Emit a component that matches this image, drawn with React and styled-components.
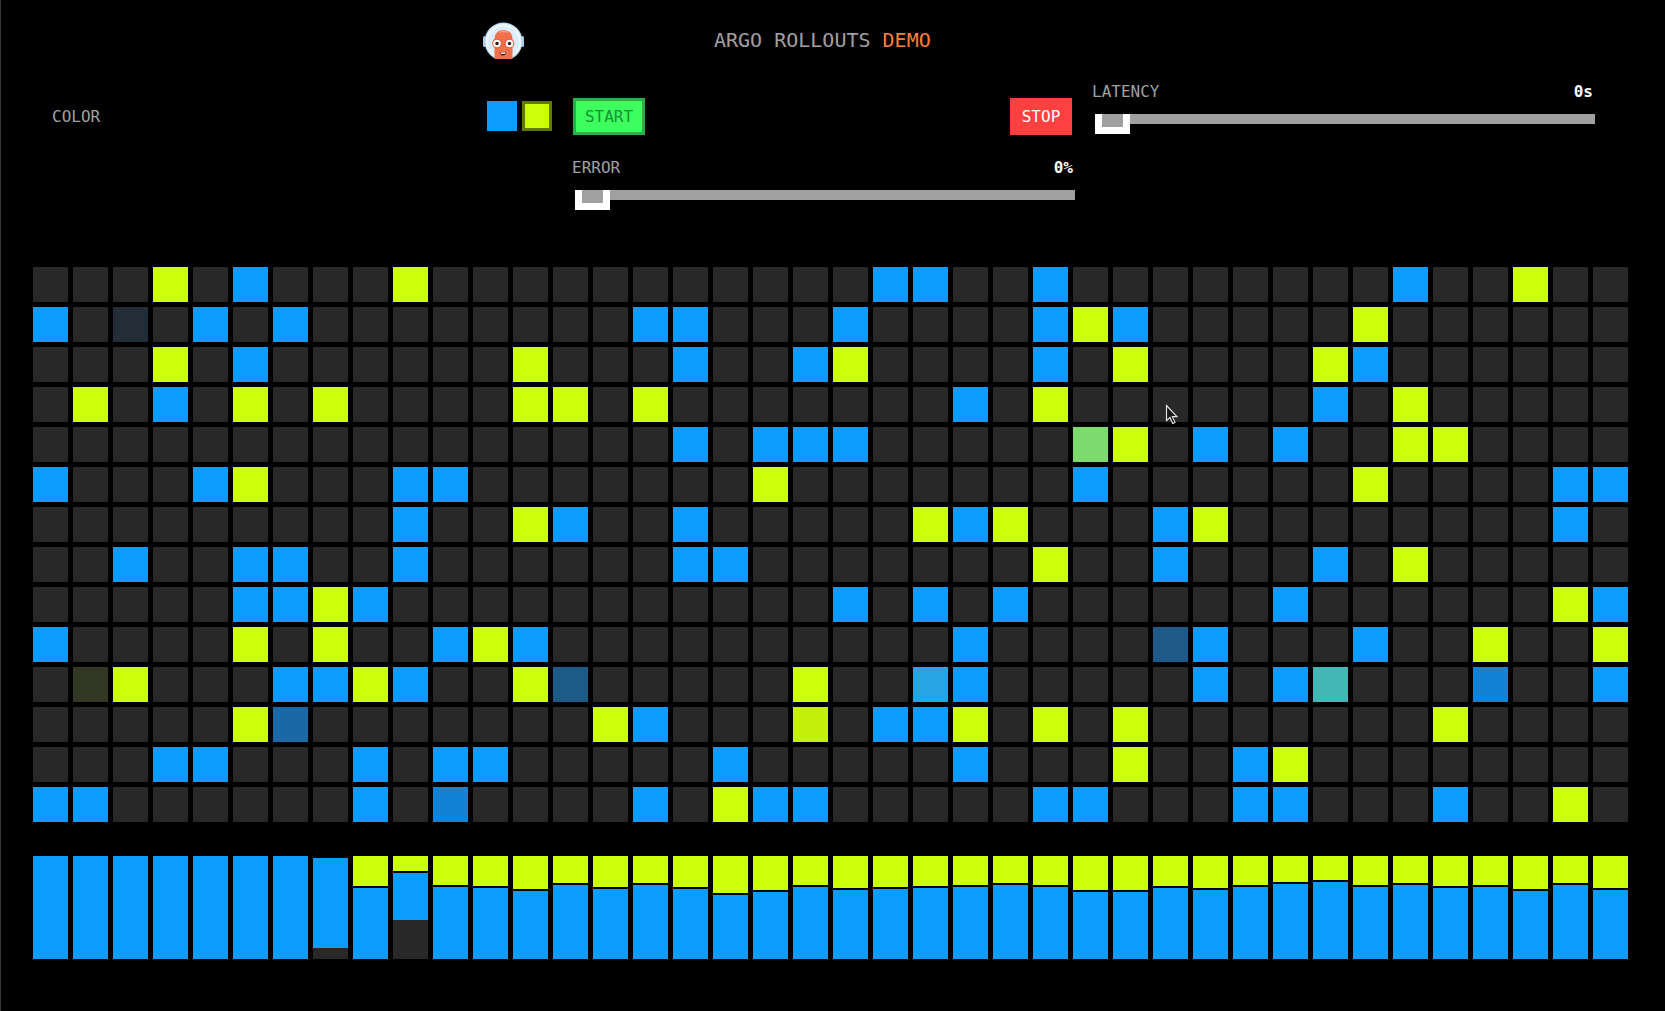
import styled, { createGlobalStyle } from 'styled-components';

const BLUE = '#0c9bff';
const YELLOW = '#cbff0c';
const OFF = '#282828';

const GlobalStyle = createGlobalStyle`
  html, body {
    margin: 0;
    background: #000;
  }
`;

const Page = styled.div`
  position: relative;
  box-sizing: border-box;
  width: 1665px;
  height: 1011px;
  overflow: hidden;
  border-left: 1px solid #3a3a3a;
  background: #000;
  color: #a0a0a0;
  font-family: "DejaVu Sans Mono", "Liberation Mono", monospace;
  font-size: 16px;
`;

const Header = styled.header`
  display: flex;
  align-items: flex-start;
  height: 82px;
  padding-left: 482px;
`;

const Logo = styled.svg`
  display: block;
  width: 41px;
  height: 37px;
  margin-top: 22px;
`;

const Title = styled.h1`
  margin: 28px 0 0 190px;
  font-size: 20px;
  font-weight: 400;
  line-height: 24px;
  color: #a0a0a0;
`;

const Accent = styled.span`
  color: #ff7f3a;
`;

const ControlsRow = styled.div`
  display: flex;
  align-items: flex-start;
  height: 76px;
  padding-left: 51px;
`;

const ColorGroup = styled.div`
  display: flex;
  align-items: flex-start;
  height: 37px;
  margin-top: 16px;
`;

const ColorLabel = styled.span`
  width: 435px;
  line-height: 37px;
`;

const Swatch = styled.div`
  box-sizing: border-box;
  width: 30px;
  height: 30px;
  margin: 3px 5px 0 0;
  background: ${(p) => p.$color};
  border: ${(p) => (p.$selected ? '3px solid #5f7806' : 'none')};
`;

const Button = styled.button`
  box-sizing: border-box;
  width: ${(p) => p.$width}px;
  height: 37px;
  padding: 0;
  border: 3px solid ${(p) => p.$border};
  background: ${(p) => p.$bg};
  color: ${(p) => p.$text};
  font: inherit;
  line-height: 31px;
  margin-left: ${(p) => p.$left || 0}px;
`;

const SliderWrap = styled.div`
  width: 503px;
  height: 52px;
  margin-left: ${(p) => p.$left || 0}px;
`;

const SliderHead = styled.div`
  display: flex;
  justify-content: space-between;
  height: 19px;
  line-height: 19px;
  padding-right: 2px;
  margin-bottom: 13px;
`;

const SliderValue = styled.span`
  color: #fff;
  font-weight: 700;
`;

const Track = styled.div`
  position: relative;
  width: 500px;
  height: 10px;
  margin-left: 3px;
  background: #a0a0a0;
`;

const Thumb = styled.div`
  position: absolute;
  left: 0;
  top: 0;
  box-sizing: border-box;
  width: 35px;
  height: 20px;
  border: 7px solid #fff;
  border-top: none;
  background: #a0a0a0;
`;

const ErrorRow = styled.div`
  display: flex;
  height: 52px;
  padding-left: 571px;
`;

const Board = styled.div`
  display: grid;
  grid-template-columns: repeat(40, 35px);
  grid-auto-rows: 35px;
  gap: 5px;
  margin: 57px 0 0 32px;
`;

const Cell = styled.div`
  background: ${(p) => p.$color};
`;

const Bars = styled.div`
  display: flex;
  gap: 5px;
  height: 103px;
  margin: 34px 0 0 32px;
`;

const Bar = styled.div`
  display: flex;
  flex-direction: column;
  width: 35px;
`;

const Segment = styled.div`
  flex: ${(p) => (p.$fill ? '1' : '0 0 auto')};
  margin-bottom: ${(p) => p.$gap || 0}px;
  background: ${(p) => p.$color};
`;

const Cursor = styled.svg`
  position: absolute;
  left: 1163px;
  top: 404px;
  width: 16px;
  height: 21px;
`;

const b = BLUE;
const y = YELLOW;

// row -> { column: colour }
const rows = [
  { 3: y, 5: b, 9: y, 21: b, 22: b, 25: b, 34: b, 37: y },
  { 0: b, 2: '#222d37', 4: b, 6: b, 15: b, 16: b, 20: b, 25: b, 26: y, 27: b, 33: y },
  { 3: y, 5: b, 12: y, 16: b, 19: b, 20: y, 25: b, 27: y, 32: y, 33: b },
  { 1: y, 3: b, 5: y, 7: y, 12: y, 13: y, 15: y, 23: b, 25: y, 32: b, 34: y },
  { 16: b, 18: b, 19: b, 20: b, 26: '#7ddb6e', 27: y, 29: b, 31: b, 34: y, 35: y },
  { 0: b, 4: b, 5: y, 9: b, 10: b, 18: y, 26: b, 33: y, 38: b, 39: b },
  { 9: b, 12: y, 13: b, 16: b, 22: y, 23: b, 24: y, 28: b, 29: y, 38: b },
  { 2: b, 5: b, 6: b, 9: b, 16: b, 17: b, 25: y, 28: b, 32: b, 34: y },
  { 5: b, 6: b, 7: y, 8: b, 20: b, 22: b, 24: b, 31: b, 38: y, 39: b },
  { 0: b, 5: y, 7: y, 10: b, 11: y, 12: b, 23: b, 28: '#1d5a8a', 29: b, 33: b, 36: y, 39: y },
  { 1: '#333824', 2: y, 6: b, 7: b, 8: y, 9: b, 12: y, 13: '#1c5a88', 19: y, 22: '#25a5e2', 23: b, 29: b, 31: b, 32: '#43b6b6', 36: '#1282d6', 39: b },
  { 5: y, 6: '#1a69a6', 14: y, 15: b, 19: '#c2f00b', 21: b, 22: b, 23: y, 25: y, 27: y, 35: y },
  { 3: b, 4: b, 8: b, 10: b, 11: b, 17: b, 23: b, 27: y, 30: b, 31: y },
  { 0: b, 1: b, 8: b, 10: '#1282d6', 15: b, 17: y, 18: b, 19: b, 25: b, 26: b, 30: b, 31: b, 35: b, 38: y },
];

// yellow height per column, null = no yellow segment
const yellowHeights = [
  null, null, null, null, null, null, null, 0, 30, 15,
  29, 30, 33, 27, 31, 27, 31, 37, 34, 29,
  32, 31, 30, 29, 27, 29, 34, 34, 30, 32,
  29, 26, 24, 29, 27, 30, 29, 33, 27, 32,
];

const darkHeights = { 7: 11, 9: 39 };

function ArgoLogo() {
  return (
    <Logo viewBox="0 0 41 37">
      <rect x="0" y="14" width="3" height="11" rx="1.5" fill="#a9cde3" />
      <rect x="38" y="14" width="3" height="11" rx="1.5" fill="#a9cde3" />
      <circle cx="20.5" cy="19.5" r="19" fill="#b9d9ee" />
      <circle cx="20.5" cy="19.5" r="17.8" fill="#edf6fc" />
      <circle cx="20.5" cy="20" r="15.5" fill="#dcecf8" />
      <path d="M11.5 37 V17 C11.5 5 29.5 5 29.5 17 V37 Z" fill="#f0704a" />
      <path d="M16 11 C17 7.5 24 7.5 25 11 C23 10 18 10 16 11 Z" fill="#f8a285" />
      <circle cx="14" cy="21.5" r="4.8" fill="#e9583a" />
      <circle cx="26.5" cy="21.5" r="4.8" fill="#e9583a" />
      <circle cx="14" cy="21.5" r="3.8" fill="#fff" />
      <circle cx="26.5" cy="21.5" r="3.8" fill="#fff" />
      <circle cx="14" cy="21.5" r="1.7" fill="#2a1a14" />
      <circle cx="26.5" cy="21.5" r="1.7" fill="#2a1a14" />
      <path d="M17 30.5 H23 C23 34.5 17 34.5 17 30.5 Z" fill="#3a1a12" />
      <rect x="17.8" y="30.5" width="4.4" height="1.3" fill="#fff" />
    </Logo>
  );
}

function Slider({ label, value, left }) {
  return (
    <SliderWrap $left={left}>
      <SliderHead>
        <span>{label}</span>
        <SliderValue>{value}</SliderValue>
      </SliderHead>
      <Track>
        <Thumb />
      </Track>
    </SliderWrap>
  );
}

export default function App() {
  return (
    <Page>
      <GlobalStyle />
      <Header>
        <ArgoLogo />
        <Title>
          ARGO ROLLOUTS <Accent>DEMO</Accent>
        </Title>
      </Header>

      <ControlsRow>
        <ColorGroup>
          <ColorLabel>COLOR</ColorLabel>
          <Swatch $color={BLUE} />
          <Swatch $color={YELLOW} $selected />
          <Button $width={72} $left={16} $border="#2aae4a" $bg="#3dff5e" $text="#1b8f36">
            START
          </Button>
          <Button $width={62} $left={365} $border="#ff4040" $bg="#ff4040" $text="#fff">
            STOP
          </Button>
        </ColorGroup>
        <Slider label="LATENCY" value="0s" left={20} />
      </ControlsRow>

      <ErrorRow>
        <Slider label="ERROR" value="0%" />
      </ErrorRow>

      <Board>
        {rows.map((row, r) =>
          Array.from({ length: 40 }, (_, c) => <Cell key={`${r}-${c}`} $color={row[c] || OFF} />)
        )}
      </Board>

      <Bars>
        {yellowHeights.map((h, c) => (
          <Bar key={c}>
            {h !== null && <Segment $color={YELLOW} $gap={2} style={{ height: h }} />}
            <Segment $color={BLUE} $fill />
            {darkHeights[c] && <Segment $color={OFF} style={{ height: darkHeights[c] }} />}
          </Bar>
        ))}
      </Bars>

      <Cursor viewBox="0 0 16 21">
        <path
          d="M2.5 1.5 V16.5 L6 13.5 L8.6 19.5 L11 18.4 L8.4 12.6 H13 Z"
          fill="#1a1a1a"
          stroke="#e8e8e8"
          strokeWidth="1.1"
        />
      </Cursor>
    </Page>
  );
}
